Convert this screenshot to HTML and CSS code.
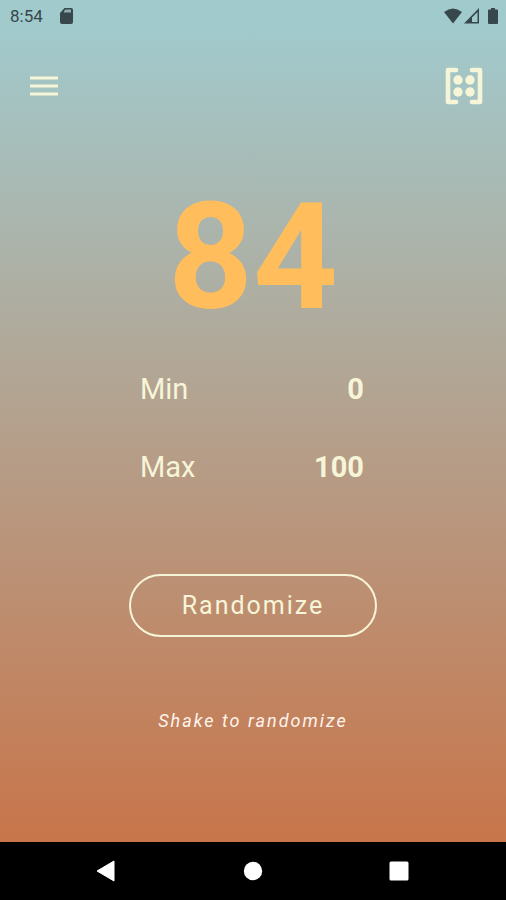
FILE: index.html
```html
<!DOCTYPE html>
<html lang="en">
<head>
<meta charset="utf-8">
<meta name="viewport" content="width=device-width, initial-scale=1">
<title>Randomizer</title>
<link rel="stylesheet" href="styles.css">
</head>
<body>
<div class="screen">
  <div class="status">
    <span class="time">8:54</span>
    <svg class="sd" width="13" height="16" viewBox="0 0 13 16"><path fill="currentColor" d="M4.500 0H11q2 0 2 2v12q0 2-2 2H2q-2 0-2-2V5z"/><path fill="#8fabae" d="M5.500 1.500h5.500v3H4V3z"/></svg>
    <div class="signals">
      <svg width="18" height="16" viewBox="0 0 18 16"><path fill="currentColor" d="M0 4Q9-3 18 4L9 15.500z"/></svg>
      <svg width="16" height="16" viewBox="0 0 16 16"><path fill="currentColor" fill-rule="evenodd" d="M15 0v15.500H0zM13.500 4v10H8V9.500z"/></svg>
      <svg class="battery" width="10" height="16" viewBox="0 0 10 16"><path fill="currentColor" d="M3 0h4v1.500h2q1 0 1 1V15q0 1-1 1H1q-1 0-1-1V2.500q0-1 1-1h2z"/></svg>
    </div>
  </div>
  <header class="toolbar">
    <button class="icon" aria-label="Menu"><svg width="28" height="20" viewBox="0 0 28 20"><path stroke="currentColor" stroke-width="3" d="M0 2h28M0 10h28M0 18h28"/></svg></button>
    <button class="icon" aria-label="Dice"><svg width="38" height="38" viewBox="0 0 38 38"><path fill="none" stroke="currentColor" stroke-width="4.600" stroke-linejoin="round" stroke-linecap="round" d="M11 3H3v32h8M27 3h8v32h-8"/><g fill="currentColor"><circle cx="13" cy="13" r="4.700"/><circle cx="25" cy="13" r="4.700"/><circle cx="13" cy="25" r="4.700"/><circle cx="25" cy="25" r="4.700"/></g></svg></button>
  </header>
  <main class="content">
    <output class="result">84</output>
    <dl class="range">
      <div class="row"><dt>Min</dt><dd>0</dd></div>
      <div class="row"><dt>Max</dt><dd>100</dd></div>
    </dl>
    <button class="randomize">Randomize</button>
    <p class="hint">Shake to randomize</p>
  </main>
</div>
<nav class="navbar">
  <button class="icon" aria-label="Back"><svg width="22" height="22" viewBox="0 0 22 22"><path fill="currentColor" d="M18 1v20L1 11z" stroke="currentColor" stroke-linejoin="round"/></svg></button>
  <button class="icon" aria-label="Home"><svg width="22" height="22" viewBox="0 0 22 22"><circle cx="11" cy="11" r="9.200" fill="currentColor"/></svg></button>
  <button class="icon" aria-label="Recents"><svg width="22" height="22" viewBox="0 0 22 22"><rect x="1.500" y="1.500" width="19" height="19" rx="1.500" fill="currentColor"/></svg></button>
</nav>
</body>
</html>
```
FILE: styles.css
```css
* {
  box-sizing: border-box;
}

body {
  margin: 0;
  min-height: 100vh;
  display: flex;
  flex-direction: column;
  font-family: Roboto, sans-serif;
  color: #f7f5d8;
}

button {
  font: inherit;
  color: inherit;
  background: none;
  border: 0;
  padding: 0;
}

svg {
  display: block;
}

.screen {
  flex: 1;
  background: linear-gradient(#a1cacd 3%, #c8754a);
}

.status {
  display: flex;
  align-items: center;
  height: 32px;
  padding: 0 8px 0 10px;
  color: #37474c;
}

.time {
  font-size: 17px;
  letter-spacing: 0;
}

.sd {
  margin-left: 17px;
}

.signals {
  display: flex;
  margin-left: auto;
  gap: 2px;
}

.battery {
  margin-left: 6px;
}

.toolbar {
  display: flex;
  align-items: center;
  justify-content: space-between;
  height: 108px;
  padding: 0 23px 0 30px;
}

.content {
  display: flex;
  flex-direction: column;
  align-items: center;
}

.result {
  margin-top: 31px;
  font-size: 148px;
  line-height: 174px;
  font-weight: 700;
  color: #ffbd5c;
}

.range {
  width: 226px;
  margin: 26px 0 0;
  display: grid;
  gap: 42px;
}

.row {
  display: flex;
  justify-content: space-between;
  font-size: 29px;
  line-height: 36px;
}

.row dd {
  margin: 0;
  padding-right: 2px;
  font-weight: 700;
}

.randomize {
  width: 248px;
  height: 63px;
  margin-top: 89px;
  border: 2px solid currentColor;
  border-radius: 32px;
  font-size: 25px;
  letter-spacing: 2px;
}

.hint {
  margin: 72px 0 0;
  font-size: 18px;
  line-height: 24px;
  font-style: italic;
  letter-spacing: 2px;
  color: #fff4ec;
}

.navbar {
  display: flex;
  align-items: center;
  justify-content: space-between;
  height: 58px;
  padding: 0 96px;
  background: #000;
  color: #fff;
}
```
